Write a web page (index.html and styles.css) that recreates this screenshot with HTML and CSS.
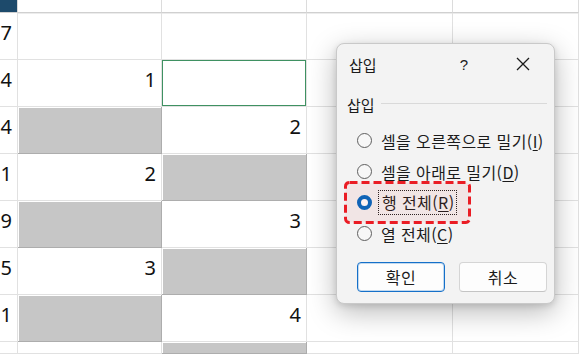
FILE: index.html
```html
<!DOCTYPE html>
<html lang="ko">
<head>
    <meta charset="UTF-8">
    <title>삽입</title>
    <link rel="stylesheet" href="styles.css">
</head>
<body>
    <div class="planilha">
        <div class="canto"></div>
        <div class="cab"></div>
        <div class="cab"></div>
        <div class="cab"></div>
        <div class="cab"></div>

        <div class="cel lin">7</div>
        <div class="cel"></div>
        <div class="cel"></div>
        <div class="cel"></div>
        <div class="cel"></div>

        <div class="cel lin">4</div>
        <div class="cel num">1</div>
        <div class="cel selecionada"></div>
        <div class="cel"></div>
        <div class="cel"></div>

        <div class="cel lin">4</div>
        <div class="cel cinza"></div>
        <div class="cel num">2</div>
        <div class="cel"></div>
        <div class="cel"></div>

        <div class="cel lin">1</div>
        <div class="cel num">2</div>
        <div class="cel cinza"></div>
        <div class="cel"></div>
        <div class="cel"></div>

        <div class="cel lin">9</div>
        <div class="cel cinza"></div>
        <div class="cel num">3</div>
        <div class="cel"></div>
        <div class="cel"></div>

        <div class="cel lin">5</div>
        <div class="cel num">3</div>
        <div class="cel cinza"></div>
        <div class="cel"></div>
        <div class="cel"></div>

        <div class="cel lin">1</div>
        <div class="cel cinza"></div>
        <div class="cel num">4</div>
        <div class="cel"></div>
        <div class="cel"></div>

        <div class="cel lin"></div>
        <div class="cel"></div>
        <div class="cel cinza"></div>
        <div class="cel"></div>
        <div class="cel"></div>
    </div>

    <!-- caixa de diálogo "삽입" -->
    <div class="dialogo">
        <div class="barra-titulo">
            <span class="titulo">삽입</span>
            <span class="ajuda">?</span>
            <span class="fechar">
                <svg width="14" height="14" viewBox="0 0 14 14"><path d="M1 1 L13 13 M13 1 L1 13" stroke="#1b1b1b" stroke-width="1.3" fill="none"/></svg>
            </span>
        </div>

        <div class="grupo">
            <span>삽입</span>
            <span class="linha"></span>
        </div>

        <div class="opcoes">
            <div class="opcao"><span class="radio"></span><span class="texto">셀을 오른쪽으로 밀기(<u>I</u>)</span></div>
            <div class="opcao"><span class="radio"></span><span class="texto">셀을 아래로 밀기(<u>D</u>)</span></div>
            <div class="opcao"><span class="radio marcado"></span><span class="texto foco">행 전체(<u>R</u>)</span></div>
            <div class="opcao"><span class="radio"></span><span class="texto">열 전체(<u>C</u>)</span></div>
        </div>

        <div class="botoes">
            <button class="botao principal">확인</button>
            <button class="botao">취소</button>
        </div>

        <!-- marcação vermelha -->
        <svg class="destaque" width="127" height="43" viewBox="0 0 127 43">
            <rect x="1.5" y="1.5" width="124" height="40" rx="4" fill="rgba(230,60,60,0.07)" stroke="#ea1c24" stroke-width="3" stroke-dasharray="8 4"/>
        </svg>
    </div>
</body>
</html>
```

FILE: styles.css
```css
body {
    margin: 0;
    padding: 0;
    width: 579px;
    height: 354px;
    overflow: hidden;
    background-color: white;
    font-family: "Noto Sans", "Liberation Sans", sans-serif;
    position: relative;
}

.planilha {
    display: grid;
    grid-template-columns: 18px 144px 145px 146px 1fr;
    grid-template-rows: 13px repeat(7, 47px) 12px;
}

.canto {
    background-color: #1d4a6b;
    border-right: 1px solid #d8d8d8;
    border-bottom: 1px solid #d0d0d0;
}

.cab {
    border-right: 1px solid #dcdcdc;
    border-bottom: 1px solid #d0d0d0;
    box-shadow: 0 1px 0 #ececec;
}

.cel {
    box-sizing: border-box;
    border-right: 1px solid #e1e1e1;
    border-bottom: 1px solid #e1e1e1;
    font-size: 20px;
    color: #111;
}

.num,
.lin {
    display: flex;
    align-items: center;
    justify-content: flex-end;
    padding-right: 5px;
    padding-bottom: 7px;
}

.cinza {
    background-color: #c6c6c6;
    border-color: #adadad;
    box-shadow: inset 1px 1px 0 #fff;
}

.selecionada {
    box-shadow: inset 0 0 0 1px #3f9162;
}

/* diálogo */
.dialogo {
    position: absolute;
    left: 336px;
    top: 43px;
    width: 217px;
    background-color: #f3f3f3;
    border: 1px solid #c9c9c9;
    border-radius: 8px;
    box-shadow: 0 8px 28px rgba(0, 0, 0, 0.28), 0 2px 6px rgba(0, 0, 0, 0.12);
    font-family: "Noto Sans CJK KR", "Noto Sans", sans-serif;
    font-size: 15px;
    color: #1b1b1b;
    padding-bottom: 11px;
}

.barra-titulo {
    display: flex;
    align-items: center;
    height: 40px;
    padding-left: 12px;
    padding-right: 8px;
}

.titulo {
    flex: 1;
}

.ajuda {
    width: 30px;
    margin-right: 21px;
    text-align: center;
    font-family: "Liberation Sans", sans-serif;
    font-size: 15px;
}

.fechar {
    width: 46px;
    display: flex;
    justify-content: center;
}

.grupo {
    display: flex;
    align-items: center;
    height: 21px;
    margin-top: 10px;
    padding-left: 10px;
    padding-right: 7px;
}

.grupo .linha {
    flex: 1;
    height: 1px;
    background-color: #d9d9d9;
    margin-left: 6px;
    margin-top: -2px;
}

.opcoes {
    margin-top: 10px;
}

.opcao {
    display: flex;
    align-items: center;
    height: 31px;
    padding-left: 20px;
}

.radio {
    box-sizing: border-box;
    flex-shrink: 0;
    width: 15px;
    height: 15px;
    border: 1px solid #5f5f5f;
    border-radius: 50%;
    background-color: #f7f7f7;
}

.radio.marcado {
    border: 4.5px solid #0067c0;
    background-color: white;
}

.texto {
    margin-left: 9px;
    font-size: 16px;
    letter-spacing: 0.4px;
    white-space: nowrap;
}

.texto u {
    text-underline-offset: 2px;
}

.foco {
    margin-left: 7px;
    padding: 0 2px 0 3px;
    line-height: 23px;
    outline: 1px dotted #222;
}

.botoes {
    display: flex;
    gap: 14px;
    margin-top: 13px;
    padding-left: 20px;
}

.botao {
    width: 88px;
    height: 30px;
    background-color: #fdfdfd;
    border: 1px solid #d5d5d5;
    border-bottom-color: #c4c4c4;
    border-radius: 4px;
    font-family: "Noto Sans CJK KR", sans-serif;
    font-size: 16px;
    letter-spacing: 0.5px;
    color: #1b1b1b;
    padding: 0;
}

.botao.principal {
    border: 1px solid #1570c9;
    box-shadow: inset 0 0 0 1px rgba(21, 112, 201, 0.25);
}

.destaque {
    position: absolute;
    left: 7px;
    top: 137px;
}
```
